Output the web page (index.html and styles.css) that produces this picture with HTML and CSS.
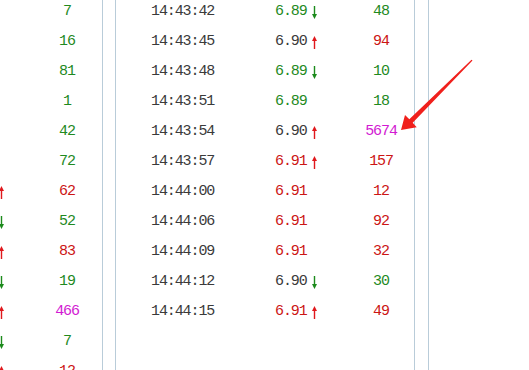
FILE: index.html
```html
<!DOCTYPE html>
<html>
<head>
<meta charset="utf-8">
<link rel="stylesheet" href="styles.css">
</head>
<body>
<div class="board">
  <section class="panel left">
    <div class="rows">
      <div class="lrow"><span class="arw"></span><span class="vol g">7</span></div>
      <div class="lrow"><span class="arw"></span><span class="vol g">16</span></div>
      <div class="lrow"><span class="arw"></span><span class="vol g">81</span></div>
      <div class="lrow"><span class="arw"></span><span class="vol g">1</span></div>
      <div class="lrow"><span class="arw"></span><span class="vol g">42</span></div>
      <div class="lrow"><span class="arw"></span><span class="vol g">72</span></div>
      <div class="lrow"><span class="arw"><svg class="up" viewBox="0 0 5 13"><path d="M2.5 0 L5 5 L3.2 5 L3.2 13 L1.8 13 L1.8 5 L0 5 Z"/></svg></span><span class="vol r">62</span></div>
      <div class="lrow"><span class="arw"><svg class="dn" viewBox="0 0 5 13"><path d="M2.5 13 L5 8 L3.2 8 L3.2 0 L1.8 0 L1.8 8 L0 8 Z"/></svg></span><span class="vol g">52</span></div>
      <div class="lrow"><span class="arw"><svg class="up" viewBox="0 0 5 13"><path d="M2.5 0 L5 5 L3.2 5 L3.2 13 L1.8 13 L1.8 5 L0 5 Z"/></svg></span><span class="vol r">83</span></div>
      <div class="lrow"><span class="arw"><svg class="dn" viewBox="0 0 5 13"><path d="M2.5 13 L5 8 L3.2 8 L3.2 0 L1.8 0 L1.8 8 L0 8 Z"/></svg></span><span class="vol g">19</span></div>
      <div class="lrow"><span class="arw"><svg class="up" viewBox="0 0 5 13"><path d="M2.5 0 L5 5 L3.2 5 L3.2 13 L1.8 13 L1.8 5 L0 5 Z"/></svg></span><span class="vol m">466</span></div>
      <div class="lrow"><span class="arw"><svg class="dn" viewBox="0 0 5 13"><path d="M2.5 13 L5 8 L3.2 8 L3.2 0 L1.8 0 L1.8 8 L0 8 Z"/></svg></span><span class="vol g">7</span></div>
      <div class="lrow"><span class="arw"><svg class="up" viewBox="0 0 5 13"><path d="M2.5 0 L5 5 L3.2 5 L3.2 13 L1.8 13 L1.8 5 L0 5 Z"/></svg></span><span class="vol r">12</span></div>
    </div>
  </section>
  <section class="panel mid">
    <div class="rows">
      <div class="row"><span class="time">14:43:42</span><span class="price g">6.89<svg class="dn" viewBox="0 0 5 13"><path d="M2.5 13 L5 8 L3.2 8 L3.2 0 L1.8 0 L1.8 8 L0 8 Z"/></svg></span><span class="vol g">48</span></div>
      <div class="row"><span class="time">14:43:45</span><span class="price n">6.90<svg class="up" viewBox="0 0 5 13"><path d="M2.5 0 L5 5 L3.2 5 L3.2 13 L1.8 13 L1.8 5 L0 5 Z"/></svg></span><span class="vol r">94</span></div>
      <div class="row"><span class="time">14:43:48</span><span class="price g">6.89<svg class="dn" viewBox="0 0 5 13"><path d="M2.5 13 L5 8 L3.2 8 L3.2 0 L1.8 0 L1.8 8 L0 8 Z"/></svg></span><span class="vol g">10</span></div>
      <div class="row"><span class="time">14:43:51</span><span class="price g">6.89</span><span class="vol g">18</span></div>
      <div class="row"><span class="time">14:43:54</span><span class="price n">6.90<svg class="up" viewBox="0 0 5 13"><path d="M2.5 0 L5 5 L3.2 5 L3.2 13 L1.8 13 L1.8 5 L0 5 Z"/></svg></span><span class="vol m">5674</span></div>
      <div class="row"><span class="time">14:43:57</span><span class="price r">6.91<svg class="up" viewBox="0 0 5 13"><path d="M2.5 0 L5 5 L3.2 5 L3.2 13 L1.8 13 L1.8 5 L0 5 Z"/></svg></span><span class="vol r">157</span></div>
      <div class="row"><span class="time">14:44:00</span><span class="price r">6.91</span><span class="vol r">12</span></div>
      <div class="row"><span class="time">14:44:06</span><span class="price r">6.91</span><span class="vol r">92</span></div>
      <div class="row"><span class="time">14:44:09</span><span class="price r">6.91</span><span class="vol r">32</span></div>
      <div class="row"><span class="time">14:44:12</span><span class="price n">6.90<svg class="dn" viewBox="0 0 5 13"><path d="M2.5 13 L5 8 L3.2 8 L3.2 0 L1.8 0 L1.8 8 L0 8 Z"/></svg></span><span class="vol g">30</span></div>
      <div class="row"><span class="time">14:44:15</span><span class="price r">6.91<svg class="up" viewBox="0 0 5 13"><path d="M2.5 0 L5 5 L3.2 5 L3.2 13 L1.8 13 L1.8 5 L0 5 Z"/></svg></span><span class="vol r">49</span></div>
    </div>
  </section>
  <section class="panel right"></section>
</div>
<svg class="pointer" viewBox="0 0 529 370" width="529" height="370">
  <polygon points="472.5,60.5 412.7,122.8 416.7,127.2 401,130 405,115 409.3,119.2 471.5,59.8"/>
</svg>
</body>
</html>
```
FILE: styles.css
```css
html, body {
  margin: 0;
  padding: 0;
  background: #ffffff;
  width: 529px;
  height: 370px;
  overflow: hidden;
}
body {
  position: relative;
  font-family: "Liberation Mono", "DejaVu Sans Mono", monospace;
  font-size: 15px;
  letter-spacing: -1.1px;
  color: #3a3a3a;
}
.board {
  display: flex;
  height: 370px;
}
.panel {
  height: 370px;
  overflow: hidden;
}
.left {
  width: 102px;
  border-right: 1px solid #b9ccd9;
  flex: none;
}
.mid {
  margin-left: 12px;
  width: 298px;
  border-left: 1px solid #b9ccd9;
  border-right: 1px solid #b9ccd9;
  flex: none;
}
.right {
  margin-left: 13px;
  flex: 1;
  border-left: 1px solid #b9ccd9;
}
.rows {
  margin-top: -3px;
}
.lrow, .row {
  display: flex;
  align-items: center;
  height: 30px;
  line-height: 30px;
  white-space: nowrap;
}
.lrow .arw {
  width: 34px;
  margin-left: -1px;
  display: flex;
  align-items: center;
}
.lrow .vol {
  width: 68px;
  text-align: center;
}
.row .time {
  margin-left: 35px;
  width: 124px;
}
.row .price {
  width: 76px;
  display: flex;
  align-items: center;
}
.row .price svg {
  margin-left: 5px;
}
.row .vol {
  width: 60px;
  text-align: center;
}
svg.up, svg.dn {
  width: 5px;
  height: 13px;
  flex: none;
}
svg.up { fill: #e0181c; }
svg.dn { fill: #1c8a1c; }
.g { color: #1f8a1f; }
.r { color: #cc1515; }
.m { color: #d21ad2; }
.n { color: #3a3a3a; }
.pointer {
  position: absolute;
  left: 0;
  top: 0;
  pointer-events: none;
}
.pointer polygon {
  fill: #f0201c;
}
```
